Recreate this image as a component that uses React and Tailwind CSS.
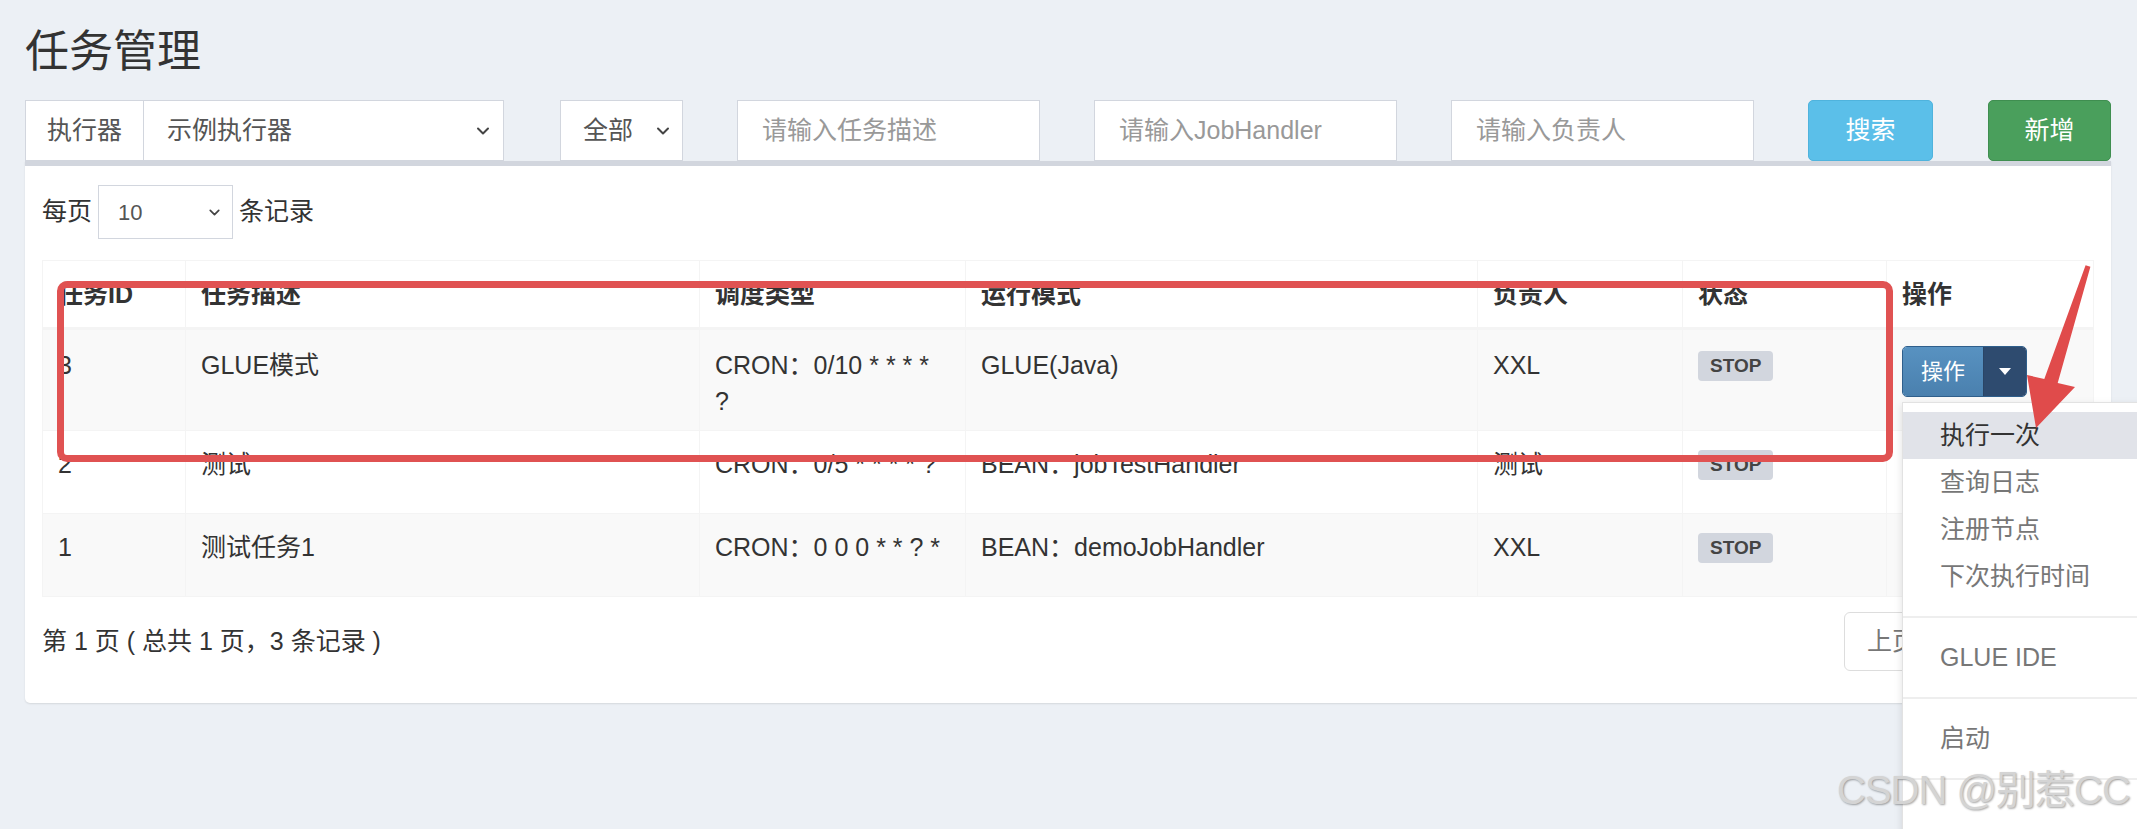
import { ChevronDown } from 'lucide-react'

const JOBS = [
  { id: 3, desc: 'GLUE模式', cron: ['CRON：0/10 * * * *', '?'], mode: 'GLUE(Java)', owner: 'XXL' },
  { id: 2, desc: '测试', cron: ['CRON：0/5 * * * * ?'], mode: 'BEAN：jobTestHandler', owner: '测试' },
  { id: 1, desc: '测试任务1', cron: ['CRON：0 0 0 * * ? *'], mode: 'BEAN：demoJobHandler', owner: 'XXL' },
]

const HEADERS = ['任务ID', '任务描述', '调度类型', '运行模式', '负责人', '状态', '操作']
const COL_WIDTHS = ['w-[143px]', 'w-[514px]', 'w-[266px]', 'w-[512px]', 'w-[205px]', 'w-[204px]', 'w-[207px]']
const ROW_STYLES = [
  { tr: 'h-[102px] bg-[#f9f9f9]', td: 'pt-[17px]' },
  { tr: 'h-[83px] bg-white', td: 'pt-[15px]' },
  { tr: 'h-[83px] bg-[#f9f9f9]', td: 'pt-[15px]' },
]

const MENU = [
  { label: '执行一次', active: true },
  { label: '查询日志' },
  { label: '注册节点' },
  { label: '下次执行时间' },
  { divider: true },
  { label: 'GLUE IDE' },
  { divider: true },
  { label: '启动' },
  { divider: true },
]

function OpButton() {
  return (
    <div className="-mt-[1px] flex h-[51px] w-[125px] overflow-hidden rounded-[5px] border border-[#2f5f8c]">
      <div className="flex w-[80px] items-center justify-center bg-linear-to-b from-[#5892c1] to-[#4a80ae] text-[22px] text-white">
        操作
      </div>
      <div className="flex flex-1 items-center justify-center border-l border-[#2a4566] bg-[#2e4b6f]">
        <span className="h-0 w-0 border-x-[6px] border-t-[7px] border-x-transparent border-t-white" />
      </div>
    </div>
  )
}

export default function App() {
  return (
    <div className="relative h-[829px] w-full overflow-hidden bg-[#ecf0f5] font-['Liberation_Sans','Noto_Sans_CJK_SC',sans-serif] text-[#333]">
      <div className="ml-[25px] w-[2086px]">
        <h1 className="pt-[27px] text-[44px] leading-[50px] font-normal">任务管理</h1>

        {/* filter bar */}
        <div className="mt-[23px] flex h-[61px] text-[25px]">
          <div className="flex w-[479px]">
            <div className="flex w-[119px] items-center justify-center border border-[#d2d6de] bg-white text-[#555]">执行器</div>
            <div className="flex flex-1 items-center justify-between border border-l-0 border-[#d2d6de] bg-white pr-[10px] pl-[23px] text-[#555]">
              <span>示例执行器</span>
              <ChevronDown size={20} strokeWidth={2.4} className="text-[#444]" />
            </div>
          </div>
          <div className="ml-[56px] flex w-[123px] items-center justify-between border border-[#d2d6de] bg-white pr-[9px] pl-[22px] text-[#555]">
            <span>全部</span>
            <ChevronDown size={20} strokeWidth={2.4} className="text-[#444]" />
          </div>
          <div className="ml-[54px] flex w-[303px] items-center border border-[#d2d6de] bg-white pl-[24px] text-[#999]">请输入任务描述</div>
          <div className="ml-[54px] flex w-[303px] items-center border border-[#d2d6de] bg-white pl-[24px] text-[#999]">请输入JobHandler</div>
          <div className="ml-[54px] flex w-[303px] items-center border border-[#d2d6de] bg-white pl-[24px] text-[#999]">请输入负责人</div>
          <button type="button" className="ml-[54px] w-[125px] rounded-[5px] border border-[#4fb3dd] bg-[#5bbfe9] text-white">搜索</button>
          <button type="button" className="ml-[55px] w-[123px] rounded-[5px] border border-[#3f8e50] bg-[#4a9f5c] text-white">新增</button>
        </div>

        {/* box */}
        <section className="rounded-b-[5px] border-t-[5px] border-[#d2d6de] bg-white pt-[19px] pr-[18px] pb-[32px] pl-[17px] text-[25px] shadow-[0_1px_2px_rgba(0,0,0,0.1)]">
          <div className="flex h-[54px] items-center">
            <span>每页</span>
            <div className="mx-[6px] flex h-[54px] w-[135px] items-center justify-between border border-[#d2d6de] pr-[9px] pl-[19px] text-[22px] text-[#555]">
              <span>10</span>
              <ChevronDown size={17} strokeWidth={2.4} className="text-[#444]" />
            </div>
            <span>条记录</span>
          </div>

          <table className="mt-[21px] w-[2051px] table-fixed border-collapse leading-[36px]">
            <colgroup>
              {COL_WIDTHS.map((width, index) => (
                <col key={index} className={width} />
              ))}
            </colgroup>
            <thead>
              <tr className="h-[66px] bg-white">
                {HEADERS.map((header) => (
                  <th key={header} className="border border-b-[3px] border-[#f4f4f4] px-[15px] py-[15px] text-left align-top font-bold">
                    {header}
                  </th>
                ))}
              </tr>
            </thead>
            <tbody>
              {JOBS.map((job, index) => {
                const style = ROW_STYLES[index]
                const cell = `border border-[#f4f4f4] px-[15px] align-top ${style.td}`
                return (
                  <tr key={job.id} className={style.tr}>
                    <td className={cell}>{job.id}</td>
                    <td className={cell}>{job.desc}</td>
                    <td className={cell}>
                      {job.cron.map((line) => (
                        <div key={line} className="whitespace-nowrap">{line}</div>
                      ))}
                    </td>
                    <td className={cell}>{job.mode}</td>
                    <td className={cell}>{job.owner}</td>
                    <td className={cell}>
                      <span className="mt-[4px] inline-block h-[30px] rounded-[4px] bg-[#d2d6de] px-[12px] align-top text-[19px] leading-[30px] font-bold text-[#444]">
                        STOP
                      </span>
                    </td>
                    {/* rows below the first are covered by the open menu */}
                    <td className={cell}>{index === 0 && <OpButton />}</td>
                  </tr>
                )
              })}
            </tbody>
          </table>

          <div className="mt-[15px] flex h-[59px] items-center justify-between">
            <span>第 1 页 ( 总共 1 页，3 条记录 )</span>
            <div className="flex h-[59px] w-[249px] items-center rounded-l-[6px] border border-[#ddd] pl-[22px] text-[#777]">上页</div>
          </div>
        </section>
      </div>

      {/* red annotation box */}
      <div className="absolute top-[281px] left-[57px] h-[181px] w-[1836px] rounded-[10px] border-[7px] border-[#e05252]" />

      {/* dropdown menu */}
      <div className="absolute top-[402px] left-[1902px] h-[460px] w-[290px] border border-[#e2e2e2] bg-white pt-[9px] text-[25px] shadow-[0_3px_8px_rgba(0,0,0,0.12)]">
        {MENU.map((item, index) =>
          item.divider ? (
            <div key={index} className="my-[16px] h-[2px] bg-[#eee]" />
          ) : (
            <div
              key={item.label}
              className={`flex h-[47px] items-center pl-[37px] ${item.active ? 'bg-[#e1e3e9] text-[#333]' : 'text-[#777]'}`}
            >
              {item.label}
            </div>
          ),
        )}
      </div>

      {/* red arrow */}
      <svg className="absolute top-0 left-0" width="2137" height="829" viewBox="0 0 2137 829">
        <polygon
          points="2085.6,265.2 2090.4,266.8 2057.7,383.1 2075,387 2036,428 2027,375 2044.3,378.9"
          fill="#e04b4b"
        />
      </svg>

      {/* watermark */}
      <div className="absolute top-[766px] left-[1837px] text-[40px] leading-[48px] tracking-[-1px] whitespace-nowrap text-[#d4d4d4] [text-shadow:1px_1px_2px_rgba(0,0,0,0.35)]">
        CSDN @别惹CC
      </div>
    </div>
  )
}
